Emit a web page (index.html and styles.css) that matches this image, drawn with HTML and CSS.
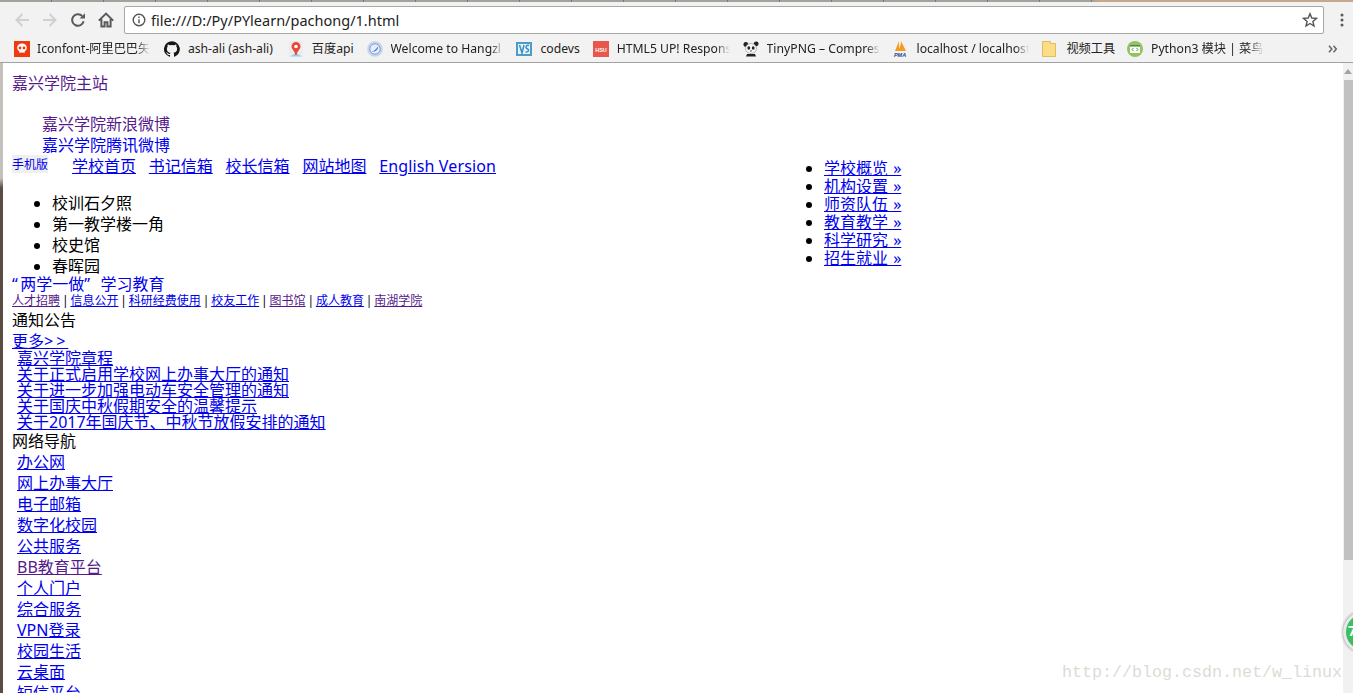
FILE: index.html
```html
<!DOCTYPE html>
<html lang="zh-CN">
<head>
<meta charset="utf-8">
<title>1.html</title>
<link rel="stylesheet" href="styles.css">
</head>
<body>
<header class="chrome">
  <div class="tabstrip"></div>
  <div class="toolbar">
    <svg class="tool" viewBox="0 0 16 16"><path class="nav-off" d="M15 8H2.500M8.500 2 2.500 8l6 6"/></svg>
    <svg class="tool" viewBox="0 0 16 16"><path class="nav-off" d="M1 8h12.500M7.500 2l6 6-6 6"/></svg>
    <svg class="tool" viewBox="0 0 16 16"><path class="nav-on" d="M13.600 9.200A5.800 5.800 0 1 1 12.200 4"/><path class="fill-on" d="M9.600 6.600h5.400V1.200z"/></svg>
    <svg class="tool" viewBox="0 0 16 16"><path class="nav-on" d="M.8 8.600 8 1.600l7.200 7M3.400 7v7.500h3.200v-4.300h2.800v4.300h3.200V7"/></svg>
    <div class="omnibox">
      <svg class="info" viewBox="0 0 14 14"><circle cx="7" cy="7" r="5.800"/><path d="M7 6.200v4M7 3.600v1.400"/></svg>
      <span class="url">file:///D:/Py/PYlearn/pachong/1.html</span>
      <svg class="star" viewBox="0 0 16 16"><path d="M8 1.700 9.800 6l4.700.4-3.600 3 1.100 4.600L8 11.500 4 14l1.100-4.600-3.600-3L6.200 6z"/></svg>
    </div>
    <svg class="dots" viewBox="0 0 4 16"><circle cx="2" cy="3" r="1.500"/><circle cx="2" cy="8" r="1.500"/><circle cx="2" cy="13" r="1.500"/></svg>
  </div>
  <nav class="bookmarks">
    <a class="bm bm-first"><svg class="bi" viewBox="0 0 16 16"><path fill="#f0390f" d="M0 0h16v16H0z"/><path fill="#fff" d="M8 2.500c3 0 4.800 1.900 4.800 4.300 0 1.700-1 2.900-2.200 3.500v1.700H9.400v-1H8.600v1H7.400v-1H6.600v1H5.400v-1.700C4.200 9.700 3.200 8.500 3.200 6.800 3.200 4.400 5 2.500 8 2.500z"/><circle cx="6" cy="7" r="1.400" fill="#f0390f"/><circle cx="10" cy="7" r="1.400" fill="#f0390f"/></svg><span class="bt fade">Iconfont-阿里巴巴矢</span></a>
    <a class="bm bm-hub"><svg class="bi" viewBox="0 0 16 16"><path fill="#161614" d="M8 .2a8 8 0 0 0-2.500 15.600c.4.100.5-.2.500-.4v-1.400c-2.200.5-2.700-1-2.700-1-.4-.9-.9-1.200-.9-1.200-.7-.5.100-.5.100-.5.800.100 1.200.8 1.200.8.700 1.200 1.900.9 2.300.7.100-.5.300-.9.500-1.100-1.800-.2-3.600-.9-3.600-4 0-.9.300-1.600.8-2.100-.1-.2-.4-1 .1-2.100 0 0 .7-.2 2.200.8a7.600 7.600 0 0 1 4 0c1.500-1 2.200-.8 2.200-.8.400 1.100.2 1.900.1 2.100.5.600.8 1.300.8 2.100 0 3.100-1.900 3.700-3.700 3.900.3.300.6.800.6 1.500v2.200c0 .2.100.5.600.4A8 8 0 0 0 8 .2z"/></svg><span class="bt">ash-ali (ash-ali)</span></a>
    <a class="bm"><svg class="bi" viewBox="0 0 16 16"><path fill="#ececec" d="M1 0h14v16H1z"/><path fill="#8ed0f0" d="M2 15.500 8 12l6 3.500z"/><path fill="#e8483c" d="M8 1a4.500 4.500 0 0 1 4.500 4.500c0 2.800-3.300 4.200-3.800 8.500H7.300C6.800 9.700 3.500 8.300 3.500 5.500A4.500 4.500 0 0 1 8 1z"/><circle cx="8" cy="5.500" r="1.800" fill="#fff"/></svg><span class="bt">百度api</span></a>
    <a class="bm"><svg class="bi" viewBox="0 0 16 16"><circle cx="8" cy="8" r="7.800" fill="#c4d4ee"/><circle cx="8" cy="8" r="5.200" fill="#e8eef8" stroke="#7f9fd8"/><path fill="#3f74cc" d="M4.600 10.500C7 10.500 9 8.500 11.400 5 11 8.500 8.500 11.500 4.600 10.500z"/></svg><span class="bt fade">Welcome to Hangzl</span></a>
    <a class="bm"><svg class="bi" viewBox="0 0 16 16"><path fill="#4b9cc8" d="M0 1h16v14H0z"/><path fill="#e6f3fa" d="M2 3h12v10H2z"/><path fill="none" stroke="#3a8fbf" stroke-width="1.500" d="M3.500 4 6 12 8 4M13 4.500c-3-1-4 2.500-1.500 3.500 2 .8 1 3.500-2 3"/></svg><span class="bt">codevs</span></a>
    <a class="bm"><svg class="bi" viewBox="0 0 16 16"><path fill="#e9564b" d="M0 0h16v16H0z"/><text class="bi-hsu" x="8" y="10.500">HSU</text></svg><span class="bt fade">HTML5 UP! Respons</span></a>
    <a class="bm"><svg class="bi" viewBox="0 0 16 16"><circle cx="2.800" cy="3.500" r="2.400" fill="#222"/><circle cx="13.200" cy="2.800" r="2.400" fill="#222"/><ellipse cx="8" cy="7.500" rx="5.500" ry="5" fill="#f6f6f6" stroke="#888" stroke-width=".6"/><ellipse cx="5.800" cy="7" rx="1.400" ry="1.800" fill="#222"/><ellipse cx="10.200" cy="7" rx="1.400" ry="1.800" fill="#222"/><path fill="#222" d="M4 13h8l1 2.500H3zM7 9.500h2L8 11z"/></svg><span class="bt fade">TinyPNG – Compres</span></a>
    <a class="bm"><svg class="bi" viewBox="0 0 16 16"><path fill="#f29b1f" d="M3 10 7 0v10zM8 10 9 0l5 10zM6 10 8.500 4 11 10z"/><text class="bi-pma" x="8" y="15.500">PMA</text></svg><span class="bt fade">localhost / localhost</span></a>
    <a class="bm bm-folder"><svg class="bf" viewBox="0 0 14 16"><path fill="#fbdc87" stroke="#e2bd5b" d="M.5.500h8v2h5v13H.5z"/></svg><span class="bt">视频工具</span></a>
    <a class="bm"><svg class="bi" viewBox="0 0 16 16"><circle cx="8" cy="8" r="8" fill="#8fc460"/><path fill="#fff" d="M3 4h10v8H3z"/><path fill="#4d8f3a" d="M3 4h10v1.600H3z"/><path fill="none" stroke="#5b8a44" d="M6.500 7 5 8.500 6.500 10M9.500 7 11 8.500 9.500 10"/></svg><span class="bt fade">Python3 模块 | 菜鸟教</span></a>
    <svg class="more" viewBox="0 0 10 8"><path d="M1 .8 3.800 4 1 7.200M5.500.8 8.300 4 5.500 7.200"/></svg>
  </nav>
</header>

<div class="viewport">
  <div class="edge"></div>
  <main class="page">
    <div class="site-links">
      <p class="line"><a class="plain visited">嘉兴学院主站</a></p>
      <ul class="social">
        <li><a class="plain visited">嘉兴学院新浪微博</a></li>
        <li><a class="plain link">嘉兴学院腾讯微博</a></li>
      </ul>
    </div>
    <div class="columns">
      <div>
        <div class="topnav">
          <a class="plain link mobile">手机版</a>
          <a class="link">学校首页</a>
          <a class="link">书记信箱</a>
          <a class="link">校长信箱</a>
          <a class="link">网站地图</a>
          <a class="link en">English Version</a>
        </div>
        <ul class="photos">
          <li>校训石夕照</li>
          <li>第一教学楼一角</li>
          <li>校史馆</li>
          <li>春晖园</li>
        </ul>
      </div>
      <ul class="mainnav">
        <li><a class="link">学校概览 »</a></li>
        <li><a class="link">机构设置 »</a></li>
        <li><a class="link">师资队伍 »</a></li>
        <li><a class="link">教育教学 »</a></li>
        <li><a class="link">科学研究 »</a></li>
        <li><a class="link">招生就业 »</a></li>
      </ul>
    </div>
    <p class="study"><a class="plain link"><span class="q-open">“</span>两学一做<span class="q-close">”</span>学习教育</a></p>
    <p class="quick"><a class="visited">人才招聘</a> | <a class="link">信息公开</a> | <a class="link">科研经费使用</a> | <a class="link">校友工作</a> | <a class="visited">图书馆</a> | <a class="link">成人教育</a> | <a class="visited">南湖学院</a></p>
    <h2 class="heading">通知公告</h2>
    <p class="more-link"><a class="link">更多<span class="arrows">&gt;&gt;</span></a></p>
    <ul class="news">
      <li><a class="link">嘉兴学院章程</a></li>
      <li><a class="link">关于正式启用学校网上办事大厅的通知</a></li>
      <li><a class="link">关于进一步加强电动车安全管理的通知</a></li>
      <li><a class="link">关于国庆中秋假期安全的温馨提示</a></li>
      <li><a class="link">关于2017年国庆节、中秋节放假安排的通知</a></li>
    </ul>
    <h2 class="heading">网络导航</h2>
    <ul class="netnav">
      <li><a class="link">办公网</a></li>
      <li><a class="link">网上办事大厅</a></li>
      <li><a class="link">电子邮箱</a></li>
      <li><a class="link">数字化校园</a></li>
      <li><a class="link">公共服务</a></li>
      <li><a class="visited">BB教育平台</a></li>
      <li><a class="link">个人门户</a></li>
      <li><a class="link">综合服务</a></li>
      <li><a class="link">VPN登录</a></li>
      <li><a class="link">校园生活</a></li>
      <li><a class="link">云桌面</a></li>
      <li><a class="link">短信平台</a></li>
    </ul>
  </main>
  <div class="scrollbar">
    <svg class="scroll-up" viewBox="0 0 8 5"><path d="M4 0 8 5H0z"/></svg>
    <div class="thumb"></div>
  </div>
  <div class="float-ball"><span class="ball-mark">7</span></div>
  <div class="watermark">http://blog.csdn.net/w_linux</div>
</div>
</body>
</html>
```

FILE: styles.css
```css
* { box-sizing: border-box; }

html, body {
  margin: 0;
  height: 693px;
  overflow: hidden;
  background: #fff;
}

body {
  display: flex;
  flex-direction: column;
  font: 16px/21px "Noto Sans", "Noto Sans CJK SC", sans-serif;
  color: #000;
}

/* browser chrome */
.chrome {
  flex: none;
  height: 63px;
  background: #f2f2f2;
  border-bottom: 1px solid #a2a2a2;
  color: #222;
}

.tabstrip {
  height: 2px;
  background:
    linear-gradient(90deg, transparent 1090px, #c9a78a 1100px),
    repeating-linear-gradient(90deg, #a5a19b 0 51px, #77736e 51px 52px);
}

.toolbar {
  display: flex;
  align-items: center;
  height: 36px;
  padding: 0 0 0 14px;
  gap: 12px;
}

.tool { width: 16px; height: 16px; flex: none; }

.nav-off, .nav-on {
  fill: none;
  stroke-width: 2;
}
.nav-off { stroke: #d0d0d0; }
.nav-on { stroke: #5a5a5a; }
.fill-on { fill: #5a5a5a; }

.omnibox {
  display: flex;
  align-items: center;
  width: 1200px;
  height: 28px;
  margin-left: -2px;
  padding: 0 5px 0 7px;
  background: #fff;
  border: 1px solid #a8a8a8;
  border-radius: 2px;
}

.info {
  width: 14px;
  height: 14px;
  flex: none;
  fill: none;
  stroke: #555;
  stroke-width: 1.4;
}

.url {
  flex: 1;
  margin-left: 5px;
  font-size: 14.5px;
  line-height: 20px;
  color: #222;
}

.star {
  width: 16px;
  height: 16px;
  flex: none;
  fill: none;
  stroke: #555;
  stroke-width: 1.4;
}

.dots {
  width: 4px;
  height: 16px;
  margin-left: 4px;
  fill: #5a5a5a;
}

.bookmarks {
  display: flex;
  align-items: center;
  height: 24px;
  padding: 0 0 2px 14px;
  gap: 12.9px;
  font-size: 12.2px;
  line-height: 16px;
}

.bm { display: flex; align-items: center; gap: 8px; flex: none; }
.bm-first { gap: 7px; margin-right: 1px; }
.bm-hub { margin-right: 2px; }
.bm-folder { gap: 10px; margin-right: -1px; }
.bi { width: 16px; height: 16px; flex: none; }
.bf { width: 14px; height: 16px; flex: none; }
.bt { white-space: nowrap; overflow: hidden; }

.fade {
  width: 113px;
  -webkit-mask-image: linear-gradient(90deg, #000 88%, transparent);
  mask-image: linear-gradient(90deg, #000 88%, transparent);
}

.bi-hsu {
  font: bold 5.5px "Liberation Sans", sans-serif;
  fill: #fff;
  text-anchor: middle;
}
.bi-pma {
  font: italic bold 5.5px "Liberation Sans", sans-serif;
  fill: #2a3f8f;
  text-anchor: middle;
}

.more {
  width: 10px;
  height: 8px;
  margin-left: auto;
  margin-right: 15px;
  fill: none;
  stroke: #666;
  stroke-width: 1.5;
}

/* viewport */
.viewport {
  position: relative;
  flex: 1;
  display: flex;
  min-height: 0;
  overflow: hidden;
}

.edge {
  flex: none;
  width: 3px;
  background: linear-gradient(#c4c1bc 115px, #5a4c42 125px);
}

.page {
  flex: 1;
  min-width: 0;
  padding: 10px 0 0 9px;
  overflow: hidden;
}

.scrollbar {
  flex: none;
  width: 10px;
  background: #f1f1f1;
  padding-left: 1px;
}

.scroll-up {
  display: block;
  width: 8px;
  height: 5px;
  margin: 6px 0 6px;
  fill: #a3a3a3;
}

.thumb {
  height: 480px;
  background: #c1c1c1;
}

.float-ball {
  position: absolute;
  left: 1343px;
  top: 548px;
  width: 42px;
  height: 42px;
  border-radius: 50%;
  background: #3fbe5f;
  border: 3px solid #e9e9e9;
  box-shadow: 0 0 3px #777;
}

.ball-mark {
  position: absolute;
  left: 2px;
  top: 7px;
  color: #fff;
  font-size: 14px;
  font-weight: 700;
  line-height: 20px;
}

.watermark {
  position: absolute;
  left: 1062px;
  top: 600px;
  font: 16.67px/20px "Liberation Mono", monospace;
  color: #dcdcd4;
  white-space: nowrap;
}

/* page content */
p, ul, h2 { margin: 0; padding: 0; }

a { text-decoration: underline; }
.bm, .plain { text-decoration: none; }
.link { color: #0000ee; }
.visited { color: #551a8b; }

.line { margin-bottom: 20px; }
.social { list-style: none; padding-left: 30px; }

.columns {
  display: grid;
  grid-template-columns: 772px 1fr;
}

.topnav {
  display: flex;
  gap: 12.8px;
  align-items: center;
}

.en { letter-spacing: .13px; }

.mobile {
  align-self: flex-start;
  width: 36px;
  margin: -1px 11.2px 0 0;
  padding-top: 2px;
  font-size: 12px;
  line-height: 16px;
  background: #f0f0f0;
}

.photos {
  margin: 16px 0 0;
  padding-left: 40px;
}

.mainnav {
  padding: 3px 0 0 40px;
  line-height: 18px;
  word-spacing: 1px;
}

.study {
  line-height: 14px;
  margin-bottom: 2px;
}
.q-open { padding-right: 2.5px; }
.q-close { padding-right: 10.5px; }

.quick {
  font-size: 12px;
  line-height: 16px;
  word-spacing: -1.25px;
  margin-bottom: 1px;
}

.heading {
  font-size: 16px;
  font-weight: 400;
  line-height: 21px;
}

.more-link {
  line-height: 18px;
  margin-top: 1px;
}
.arrows { letter-spacing: 3px; }

.news, .netnav {
  list-style: none;
  padding-left: 5px;
}
.news {
  line-height: 16px;
  margin-bottom: 1px;
}
```
